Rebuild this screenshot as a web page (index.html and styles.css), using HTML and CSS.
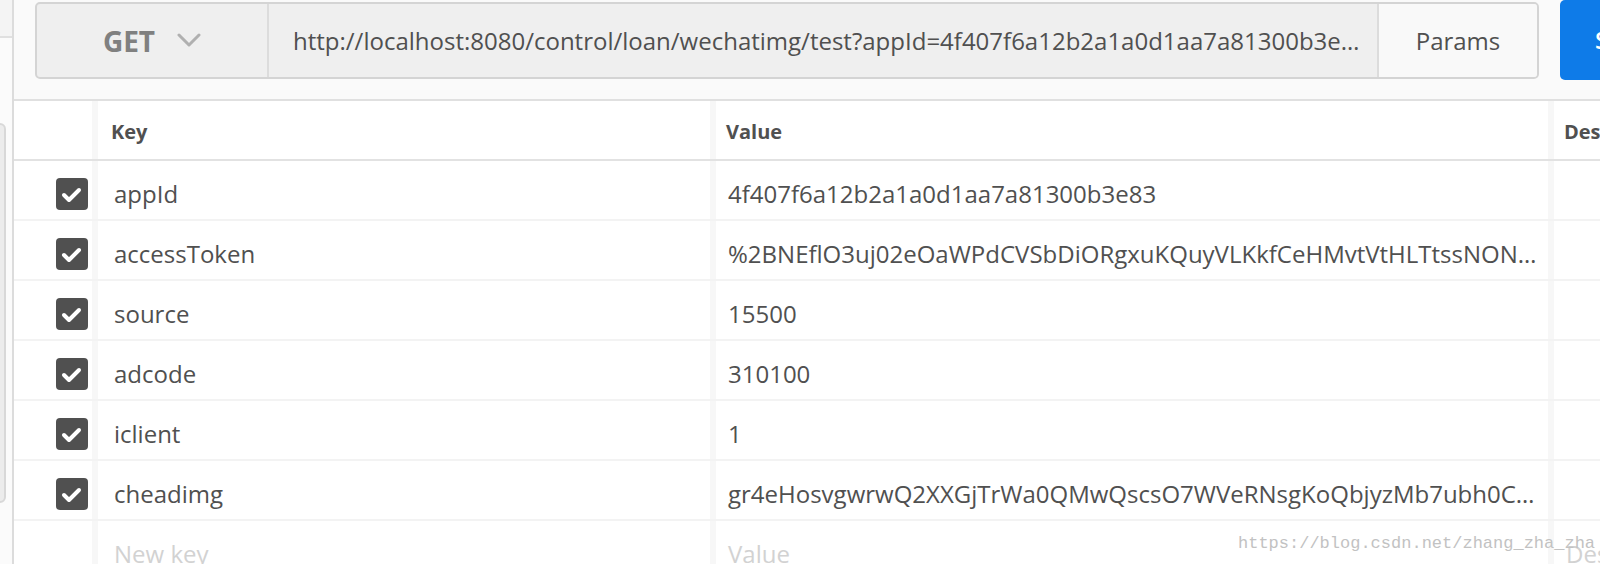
FILE: index.html
```html
<!DOCTYPE html>
<html lang="en">
<head>
    <meta charset="UTF-8">
    <meta name="viewport" content="width=device-width, initial-scale=1.0">
    <title>Request Params</title>
    <link rel="stylesheet" href="styles.css">
</head>
<body>
    <div class="app">
        <aside class="sidebar">
            <div class="side-head"></div>
            <div class="side-card"></div>
        </aside>

        <main class="main">
            <div class="request-bar">
                <div class="url-group">
                    <div class="method">
                        <span>GET</span>
                        <svg class="chevron" width="24" height="16" viewBox="0 0 24 16"><path d="M2 3l10 10 10-10" fill="none" stroke="#b0b0b0" stroke-width="3" stroke-linecap="round" stroke-linejoin="round"/></svg>
                    </div>
                    <div class="url">http://localhost:8080/control/loan/wechatimg/test?appId=4f407f6a12b2a1a0d1aa7a81300b3e83&amp;accessToken=%2BNEflO3uj02eOaWPdCVSbDiORgxuKQuyVLKkfCeHMvtVtHLTtssNON</div>
                    <div class="params">Params</div>
                </div>
                <div class="send">Send</div>
            </div>

            <div class="kv">
                <div class="kv-row kv-head">
                    <div class="cell"></div>
                    <div class="cell key">Key</div>
                    <div class="cell">Value</div>
                    <div class="cell">Description</div>
                </div>
                <div class="kv-row">
                    <div class="cell"><svg class="check" viewBox="0 0 32 32"><rect width="32" height="32" rx="4" fill="#505050"/><path d="M8 17l5 5 10-10" fill="none" stroke="#fff" stroke-width="4" stroke-linecap="round" stroke-linejoin="round"/></svg></div>
                    <div class="cell key">appId</div>
                    <div class="cell value">4f407f6a12b2a1a0d1aa7a81300b3e83</div>
                    <div class="cell"></div>
                </div>
                <div class="kv-row">
                    <div class="cell"><svg class="check" viewBox="0 0 32 32"><rect width="32" height="32" rx="4" fill="#505050"/><path d="M8 17l5 5 10-10" fill="none" stroke="#fff" stroke-width="4" stroke-linecap="round" stroke-linejoin="round"/></svg></div>
                    <div class="cell key">accessToken</div>
                    <div class="cell value">%2BNEflO3uj02eOaWPdCVSbDiORgxuKQuyVLKkfCeHMvtVtHLTtssNONqW8xY2</div>
                    <div class="cell"></div>
                </div>
                <div class="kv-row">
                    <div class="cell"><svg class="check" viewBox="0 0 32 32"><rect width="32" height="32" rx="4" fill="#505050"/><path d="M8 17l5 5 10-10" fill="none" stroke="#fff" stroke-width="4" stroke-linecap="round" stroke-linejoin="round"/></svg></div>
                    <div class="cell key">source</div>
                    <div class="cell value">15500</div>
                    <div class="cell"></div>
                </div>
                <div class="kv-row">
                    <div class="cell"><svg class="check" viewBox="0 0 32 32"><rect width="32" height="32" rx="4" fill="#505050"/><path d="M8 17l5 5 10-10" fill="none" stroke="#fff" stroke-width="4" stroke-linecap="round" stroke-linejoin="round"/></svg></div>
                    <div class="cell key">adcode</div>
                    <div class="cell value">310100</div>
                    <div class="cell"></div>
                </div>
                <div class="kv-row">
                    <div class="cell"><svg class="check" viewBox="0 0 32 32"><rect width="32" height="32" rx="4" fill="#505050"/><path d="M8 17l5 5 10-10" fill="none" stroke="#fff" stroke-width="4" stroke-linecap="round" stroke-linejoin="round"/></svg></div>
                    <div class="cell key">iclient</div>
                    <div class="cell value">1</div>
                    <div class="cell"></div>
                </div>
                <div class="kv-row">
                    <div class="cell"><svg class="check" viewBox="0 0 32 32"><rect width="32" height="32" rx="4" fill="#505050"/><path d="M8 17l5 5 10-10" fill="none" stroke="#fff" stroke-width="4" stroke-linecap="round" stroke-linejoin="round"/></svg></div>
                    <div class="cell key">cheadimg</div>
                    <div class="cell value">gr4eHosvgwrwQ2XXGjTrWa0QMwQscsO7WVeRNsgKoQbjyzMb7ubh0CkT5dPq</div>
                    <div class="cell"></div>
                </div>
                <div class="kv-row kv-new">
                    <div class="cell"></div>
                    <div class="cell key">New key</div>
                    <div class="cell">Value</div>
                    <div class="cell">Description</div>
                </div>
            </div>
        </main>

        <div class="watermark">https://blog.csdn.net/zhang_zha_zha</div>
    </div>
</body>
</html>
```

FILE: styles.css
```css
* {
    box-sizing: border-box;
}
body {
    margin: 0;
    font-family: "Open Sans", "Noto Sans", sans-serif;
    color: #505050;
    background-color: #fafafa;
    overflow: hidden;
}
.app {
    position: relative;
    display: flex;
    width: 1600px;
    height: 564px;
    overflow: hidden;
}

/* left pane, mostly cut off */
.sidebar {
    flex: none;
    width: 14px;
    background-color: #fbfbfb;
    border-right: 2px solid #dcdcdc;
    box-shadow: 1px 0 3px rgba(0, 0, 0, 0.06);
    overflow: hidden;
}
.side-head {
    height: 38px;
    background-color: #f4f4f4;
    border-bottom: 2px solid #e0e0e0;
}
.side-card {
    width: 26px;
    height: 380px;
    margin: 85px 0 0 -20px;
    background-color: #ececec;
    border: 2px solid #d8d8d8;
    border-radius: 6px;
}

.main {
    flex: 1;
    min-width: 0;
    overflow: hidden;
}

/* request bar */
.request-bar {
    display: flex;
    align-items: flex-start;
    gap: 21px;
    height: 101px;
    padding-left: 21px;
    background-color: #fafafa;
    border-bottom: 2px solid #e0e0e0;
}
.url-group {
    flex: none;
    display: flex;
    width: 1504px;
    height: 77px;
    margin-top: 2px;
    background-color: #efefef;
    border: 2px solid #d4d4d4;
    border-radius: 5px;
    overflow: hidden;
}
.method {
    flex: none;
    display: flex;
    align-items: center;
    justify-content: center;
    gap: 22px;
    width: 232px;
    font-size: 28px;
    font-weight: 700;
    color: #808080;
    border-right: 2px solid #dcdcdc;
}
.chevron {
    margin-top: -2px;
}
.url {
    flex: 1;
    min-width: 0;
    padding: 0 14px 0 24px;
    font-size: 24px;
    line-height: 73px;
    white-space: nowrap;
    overflow: hidden;
    text-overflow: ellipsis;
}
.params {
    flex: none;
    display: flex;
    align-items: center;
    justify-content: center;
    width: 160px;
    font-size: 24px;
    background-color: #f9f9f9;
    border-left: 2px solid #dcdcdc;
}
.send {
    flex: none;
    width: 200px;
    height: 80px;
    padding-left: 35px;
    font-size: 24px;
    font-weight: 600;
    line-height: 80px;
    color: #fff;
    background-color: #0e7be8;
    border-radius: 5px;
}

/* key / value table */
.kv {
    background-color: #fff;
}
.kv-row {
    display: grid;
    grid-template-columns: 78px 618px 838px 300px;
    height: 60px;
    border-bottom: 2px solid #f3f3f3;
}
.kv-head {
    height: 60px;
    border-bottom: 2px solid #e2e2e2;
}
.cell {
    padding: 17px 12px 0;
    font-size: 24px;
    line-height: 32px;
    white-space: nowrap;
    overflow: hidden;
    text-overflow: ellipsis;
    border-left: 6px solid #f7f7f7;
}
.cell:first-child {
    display: flex;
    justify-content: flex-end;
    padding: 17px 4px 0 0;
    border-left: none;
}
.cell.key {
    padding-left: 16px;
}
.cell.value {
    padding-right: 4px;
}
.kv-head .cell {
    padding: 17px 10px 0;
    font-size: 20px;
    font-weight: 700;
    line-height: 28px;
}
.kv-head .cell.key {
    padding-left: 13px;
}
.kv-new .cell {
    color: #d2d2d2;
}
.check {
    width: 32px;
    height: 32px;
}

.watermark {
    position: absolute;
    left: 1238px;
    top: 533px;
    font-family: "Liberation Mono", monospace;
    font-size: 17px;
    line-height: 22px;
    color: #c2c2c2;
    white-space: nowrap;
}
```
